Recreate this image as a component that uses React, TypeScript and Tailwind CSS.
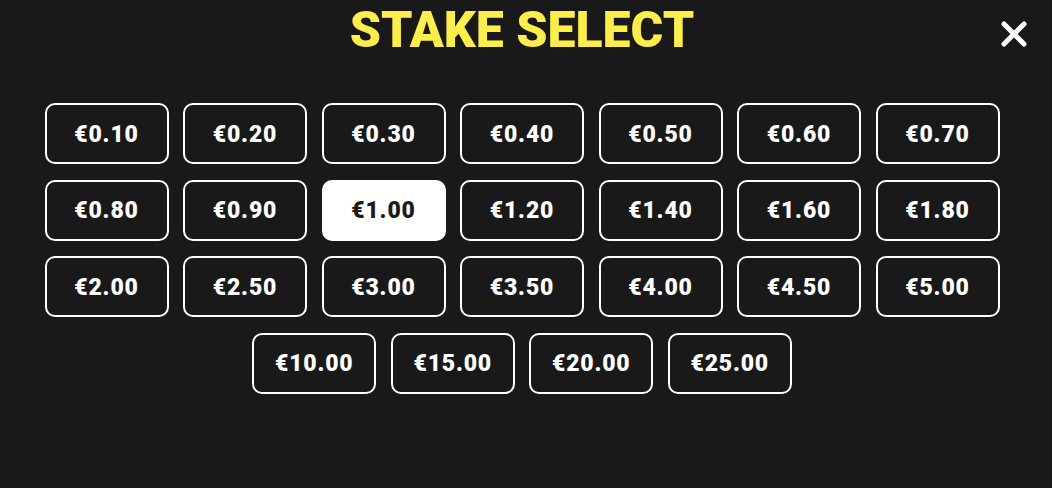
import { useState } from 'react'

const STAKES = [
    0.1, 0.2, 0.3, 0.4, 0.5, 0.6, 0.7,
    0.8, 0.9, 1, 1.2, 1.4, 1.6, 1.8,
    2, 2.5, 3, 3.5, 4, 4.5, 5,
    10, 15, 20, 25,
]

export default function App() {
    const [selected, setSelected] = useState(1)

    return (
        <div className="w-[1052px] h-[488px] bg-[#191919] overflow-hidden relative font-['Roboto','Liberation_Sans',sans-serif]">
            <div className="w-[1044px] flex flex-col items-center">
                <h1 className="mt-[1px] text-[50px] leading-[58px] font-black text-[#fdee4b]">
                    STAKE SELECT
                </h1>

                <div className="mt-[44px] w-[955px] flex flex-wrap justify-center gap-x-[14.5px] gap-y-[15.5px]">
                    {STAKES.map((s) => {
                        const active = s === selected
                        return (
                            <button
                                key={s}
                                onClick={() => setSelected(s)}
                                className={
                                    active
                                        ? 'w-[124px] h-[61px] pt-[3px] rounded-[10px] border-2 border-white bg-white text-[#1b1b1b] text-[23px] font-black tracking-[0.8px]'
                                        : 'w-[124px] h-[61px] pt-[3px] rounded-[10px] border-2 border-white bg-[#191919] text-white text-[23px] font-black tracking-[0.8px]'
                                }
                            >
                                €{s.toFixed(2)}
                            </button>
                        )
                    })}
                </div>
            </div>

            <button className="absolute left-[1000px] top-[20px] w-[28px] h-[28px] flex items-center justify-center">
                <svg width="26" height="26" viewBox="0 0 26 26" fill="none">
                    <path d="M3 3 L23 23 M23 3 L3 23" stroke="white" strokeWidth="5" strokeLinecap="round" />
                </svg>
            </button>
        </div>
    )
}
